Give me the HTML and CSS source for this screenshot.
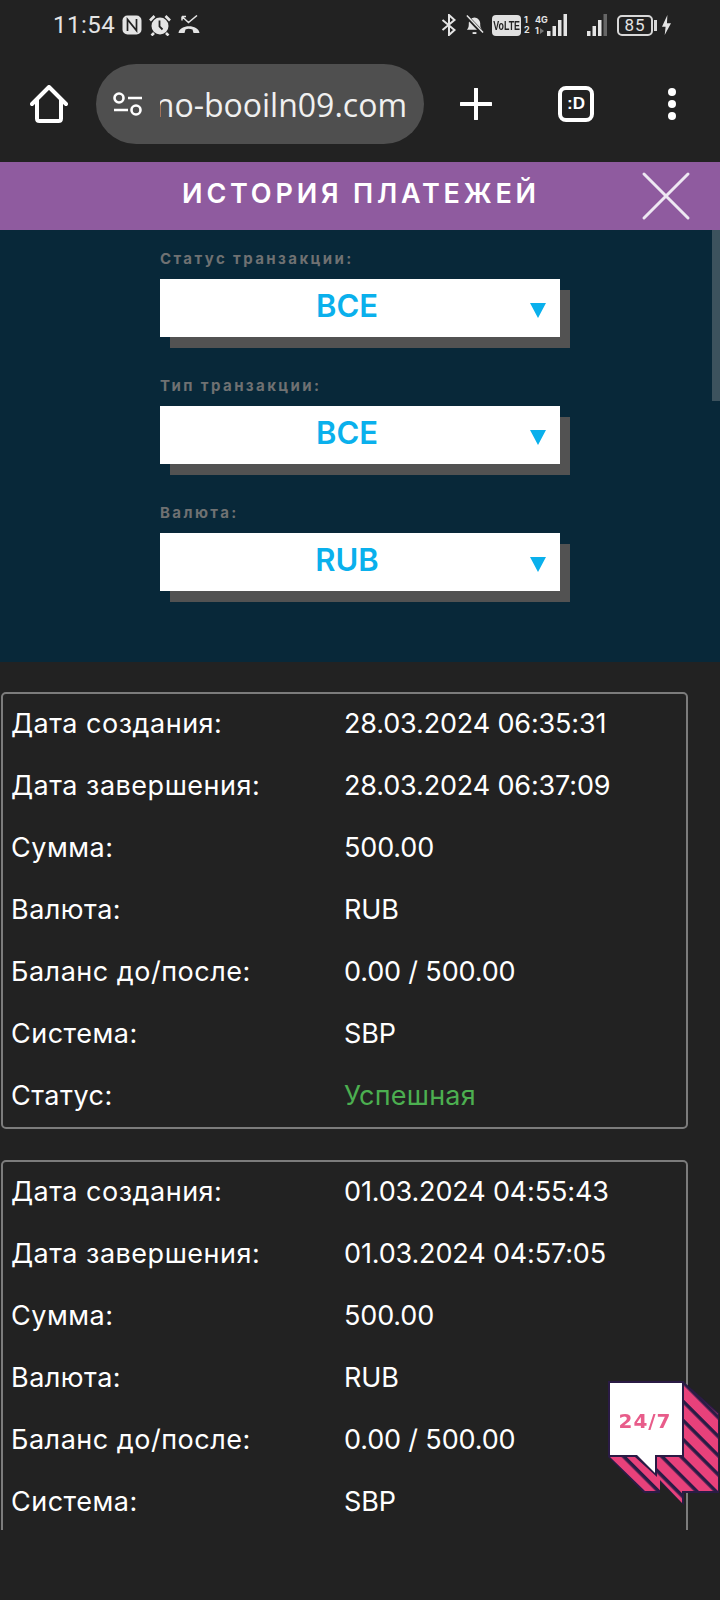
FILE: index.html
```html
<!DOCTYPE html>
<html lang="ru">

<head>
    <meta charset="UTF-8">
    <meta name="viewport" content="width=device-width, initial-scale=1.0">
    <title>История платежей</title>
    <link rel="stylesheet" href="styles.css">
</head>

<body>
    <div class="status-bar">
        <div class="status-left">
            <span class="clock">11:54</span>
            <svg width="20" height="20" viewBox="0 0 20 20"><rect x="0.5" y="0.5" width="19" height="19" rx="5" fill="#e4e4e4"/><path d="M5.500 16V4.500L14.500 15.500V4" fill="none" stroke="#222" stroke-width="1.700"/></svg>
            <svg width="22" height="21" viewBox="0 0 22 21"><circle cx="11" cy="11" r="8.500" fill="#e4e4e4"/><path d="M10.500 5.500v6l3 3" fill="none" stroke="#222" stroke-width="1.800"/><path d="M1 5.500l4.500-4.500M21 5.500L16.500 1M5 18l-2.500 2.500M17 18l2.500 2.500" stroke="#e4e4e4" stroke-width="2.600"/></svg>
            <svg width="22" height="20" viewBox="0 0 22 20"><path d="M0.500 18c1-9 20-9 21 0h-6l-1-3.500c-3-1-5-1-7 0L6.500 18z" fill="#e4e4e4"/><path d="M4 1.500l6.500 6L19 0.500M4 1.500v4M4 1.500h4" fill="none" stroke="#e4e4e4" stroke-width="1.500"/></svg>
        </div>
        <div class="status-right">
            <svg width="16" height="22" viewBox="0 0 16 22"><path d="M1.500 6l12 10-5.500 5V1l5.500 5-12 10" fill="none" stroke="#e4e4e4" stroke-width="2"/></svg>
            <svg class="ic-bell" width="19" height="22" viewBox="0 0 20 22"><path d="M2 16c2-2 2-4 2-7 0-3 3-6 6-6s6 3 6 6c0 3 0 5 2 7z" fill="#e4e4e4"/><path d="M8 19.500h4" stroke="#e4e4e4" stroke-width="2"/><path d="M1 1l18 19" stroke="#222" stroke-width="4"/><path d="M2 1l17 18" stroke="#e4e4e4" stroke-width="1.600"/></svg>
            <span class="volte"><span class="volte-text">VoLTE</span></span>
            <span class="sim-nums"><span>1</span><span>2</span></span>
            <span class="net"><span>4G</span><span>1<i class="net-arrow"></i></span></span>
            <svg width="21" height="22" viewBox="0 0 21 22"><path d="M0 17h3.500v5H0zM5.500 12H9v10H5.500zM11 6h3.500v16H11zM16.500 0H20v22h-3.500z" fill="#e4e4e4"/></svg>
            <svg class="ic-sig2" width="21" height="22" viewBox="0 0 21 22"><path d="M0 17h3.500v5H0zM5.500 12H9v10H5.500zM11 6h3.500v16H11z" fill="#e4e4e4"/><path d="M16.500 0H20v22h-3.500z" fill="#666"/></svg>
            <span class="battery">85</span>
            <span class="battery-tip"></span>
            <svg class="ic-bolt" width="9" height="22" viewBox="0 0 10 22"><path d="M6 0L0 13h4l-1 9 7-13H5.500z" fill="#e4e4e4"/></svg>
        </div>
    </div>

    <div class="toolbar">
        <svg class="tb-home" width="38" height="38" viewBox="0 0 38 38"><path d="M2 19L19 2l17 17M7 15v18.500c0 1.500 1 2.500 2.500 2.500h19c1.500 0 2.500-1 2.500-2.500V15" fill="none" stroke="#fff" stroke-width="4" stroke-linejoin="round" stroke-linecap="round"/></svg>
        <div class="url-pill">
            <svg width="30" height="24" viewBox="0 0 30 24"><circle cx="6" cy="6" r="4.500" fill="none" stroke="#fff" stroke-width="2.600"/><path d="M15 6h14M1 18h14" stroke="#fff" stroke-width="2.600"/><circle cx="23" cy="18" r="4.500" fill="none" stroke="#fff" stroke-width="2.600"/></svg>
            <div class="url-clip"><span class="url-text">casino-booiln09.com</span></div>
        </div>
        <svg class="tb-plus" width="32" height="32" viewBox="0 0 32 32"><path d="M16 1v30M1 16h30" stroke="#fff" stroke-width="4" stroke-linecap="round"/></svg>
        <div class="tab-box">:D</div>
        <div class="tb-dots"><span></span><span></span><span></span></div>
    </div>

    <div class="head-bar">
        <h1 class="head-title">ИСТОРИЯ ПЛАТЕЖЕЙ</h1>
        <svg class="head-close" width="50" height="50" viewBox="0 0 50 50"><path d="M3 3l44 44M47 3L3 47" stroke="#eee8f2" stroke-width="3" stroke-linecap="round"/></svg>
    </div>

    <div class="filters">
        <div class="filter">
            <div class="filter-label">Статус транзакции:</div>
            <div class="select"><span>ВСЕ</span><i class="caret"></i></div>
        </div>
        <div class="filter">
            <div class="filter-label">Тип транзакции:</div>
            <div class="select"><span>ВСЕ</span><i class="caret"></i></div>
        </div>
        <div class="filter">
            <div class="filter-label">Валюта:</div>
            <div class="select"><span>RUB</span><i class="caret"></i></div>
        </div>
        <div class="scroll-thumb"></div>
    </div>

    <div class="history">
        <div class="card">
            <div class="row"><span class="key">Дата создания:</span><span>28.03.2024 06:35:31</span></div>
            <div class="row"><span class="key">Дата завершения:</span><span>28.03.2024 06:37:09</span></div>
            <div class="row"><span class="key">Сумма:</span><span>500.00</span></div>
            <div class="row"><span class="key">Валюта:</span><span>RUB</span></div>
            <div class="row"><span class="key">Баланс до/после:</span><span>0.00 / 500.00</span></div>
            <div class="row"><span class="key">Система:</span><span>SBP</span></div>
            <div class="row"><span class="key">Статус:</span><span class="ok">Успешная</span></div>
        </div>
        <div class="card">
            <div class="row"><span class="key">Дата создания:</span><span>01.03.2024 04:55:43</span></div>
            <div class="row"><span class="key">Дата завершения:</span><span>01.03.2024 04:57:05</span></div>
            <div class="row"><span class="key">Сумма:</span><span>500.00</span></div>
            <div class="row"><span class="key">Валюта:</span><span>RUB</span></div>
            <div class="row"><span class="key">Баланс до/после:</span><span>0.00 / 500.00</span></div>
            <div class="row"><span class="key">Система:</span><span>SBP</span></div>
        </div>
    </div>

    <svg class="chat-widget" width="112" height="124" viewBox="0 0 112 124">
        <defs>
            <pattern id="stripes" width="13.500" height="13.500" patternUnits="userSpaceOnUse" patternTransform="rotate(45)">
                <rect width="13.500" height="13.500" fill="#e8417b"/>
                <rect width="13.500" height="3.500" fill="#2a1b45"/>
            </pattern>
        </defs>
        <path d="M76 1l35 31v80H76v12L52 101v11H36L0 76V1z" fill="#2a1b45"/>
        <path d="M78 4l32 29v77H74v12L52 99v11H37L2 76V4z" fill="url(#stripes)"/>
        <path d="M0 0h76v76H49v20L27 76H0z" fill="#2a1b45"/>
        <path d="M2 2h72v72H47v18L29 74H2z" fill="#fff"/>
        <text class="chat-text" x="37" y="47" text-anchor="middle">24/7</text>
    </svg>
</body>

</html>
```

FILE: styles.css
```css
* {
    box-sizing: border-box;
}

body {
    margin: 0;
    width: 720px;
    height: 1600px;
    background: #222222;
    font-family: Inter, "Noto Sans", sans-serif;
    color: #fff;
    overflow: hidden;
    position: relative;
}

/* status bar */
.status-bar {
    height: 50px;
    padding: 14px 49px 0 53px;
    display: flex;
    justify-content: space-between;
    align-items: flex-start;
}

.status-left {
    display: flex;
    align-items: center;
    gap: 7px;
    height: 22px;
}

.clock {
    font-family: Roboto, sans-serif;
    font-size: 24px;
    letter-spacing: 0.5px;
    color: #e4e4e4;
}

.status-right {
    display: flex;
    align-items: center;
    height: 22px;
    color: #e4e4e4;
}

.ic-bell {
    margin-left: 8px;
}

.volte {
    margin-left: 8px;
    background: #e0e0e0;
    color: #222;
    width: 29px;
    height: 21px;
    border-radius: 4px;
    display: flex;
    align-items: center;
    justify-content: center;
}

.volte-text {
    font-family: "Liberation Sans", sans-serif;
    font-size: 13px;
    font-weight: bold;
    transform: scaleX(0.68);
}

.sim-nums {
    margin-left: 3px;
    width: 7px;
    display: flex;
    flex-direction: column;
    font-size: 9px;
    line-height: 10px;
    font-weight: bold;
}

.net {
    margin-left: 4px;
    width: 12px;
    display: flex;
    flex-direction: column;
    font-size: 9px;
    line-height: 11px;
    font-weight: bold;
}

.net-arrow {
    display: inline-block;
    margin-left: 1px;
    border-top: 3px solid transparent;
    border-bottom: 3px solid transparent;
    border-left: 4px solid #777;
}

.ic-sig2 {
    margin-left: 19px;
}

.battery {
    margin-left: 9px;
    width: 36px;
    height: 21px;
    border: 2px solid #d8d8d8;
    border-radius: 5px;
    font-family: Roboto, sans-serif;
    font-size: 17px;
    line-height: 17px;
    text-align: center;
    letter-spacing: 1px;
}

.battery-tip {
    margin-left: 1px;
    width: 3px;
    height: 11px;
    background: #d8d8d8;
}

.ic-bolt {
    margin-left: 5px;
}

/* browser toolbar */
.toolbar {
    height: 112px;
    padding: 14px 0 18px 30px;
    display: flex;
    align-items: center;
}

.url-pill {
    margin-left: 28px;
    width: 328px;
    height: 80px;
    border-radius: 40px;
    background: #4f4f4f;
    padding-left: 17px;
    display: flex;
    align-items: center;
}

.url-clip {
    margin-left: 17px;
    width: 247px;
    overflow: hidden;
    display: flex;
    justify-content: flex-end;
}

.url-text {
    font-family: "Open Sans", sans-serif;
    font-size: 32px;
    white-space: nowrap;
    color: #f0f0f0;
}

.tb-plus {
    margin-left: 36px;
}

.tab-box {
    margin-left: 66px;
    width: 36px;
    height: 36px;
    border: 4px solid #fff;
    border-radius: 8px;
    font-family: "Liberation Sans", sans-serif;
    font-size: 17px;
    font-weight: bold;
    text-align: center;
    line-height: 27px;
}

.tb-dots {
    margin-left: 74px;
    display: flex;
    flex-direction: column;
    gap: 4px;
}

.tb-dots span {
    width: 8px;
    height: 8px;
    border-radius: 50%;
    background: #fff;
}

/* purple header */
.head-bar {
    height: 68px;
    padding-bottom: 6px;
    background: #8f5b9f;
    position: relative;
    display: flex;
    align-items: center;
    justify-content: center;
}

.head-title {
    margin: 0 0 0 2px;
    font-size: 27px;
    font-weight: 600;
    letter-spacing: 3.8px;
}

.head-close {
    position: absolute;
    right: 29px;
    top: 9px;
    filter: blur(0.5px);
}

/* filters */
.filters {
    height: 432px;
    background: #082839;
    padding: 20px 0 0 160px;
    position: relative;
}

.filter {
    width: 400px;
    height: 127px;
}

.filter-label {
    font-size: 15px;
    font-weight: 700;
    letter-spacing: 2.4px;
    line-height: 18px;
    color: #6f7172;
}

.select {
    margin-top: 11px;
    height: 58px;
    background: #fff;
    box-shadow: 10px 11px 0 #525252;
    color: #0ab0ec;
    font-size: 31px;
    font-weight: 600;
    display: flex;
    align-items: center;
    justify-content: center;
    position: relative;
}

.select span {
    margin: 0 26px 6px 0;
}

.caret {
    position: absolute;
    right: 14px;
    top: 24px;
    border-left: 8px solid transparent;
    border-right: 8px solid transparent;
    border-top: 15px solid #0ab0ec;
}

.scroll-thumb {
    position: absolute;
    right: 0;
    top: 0;
    width: 8px;
    height: 171px;
    background: #3c525d;
}

/* payment cards */
.history {
    height: 868px;
    padding: 30px 32px 0 1px;
    overflow: hidden;
}

.card {
    height: 437px;
    margin-bottom: 31px;
    border: 2px solid #7c7c7c;
    border-radius: 5px;
    padding: 0 8px;
}

.row {
    height: 62px;
    padding-bottom: 4px;
    display: flex;
    align-items: center;
    font-size: 27px;
    letter-spacing: -0.15px;
}

.key {
    width: 333px;
    letter-spacing: 0.5px;
}

.ok {
    color: #4caf50;
    letter-spacing: 0.2px;
}

/* 24/7 chat button */
.chat-widget {
    position: absolute;
    left: 608px;
    top: 1381px;
    filter: blur(0.4px);
}

.chat-text {
    font-family: "DejaVu Sans", sans-serif;
    font-size: 20px;
    font-weight: bold;
    letter-spacing: 1px;
    fill: #e85c8a;
}
```
